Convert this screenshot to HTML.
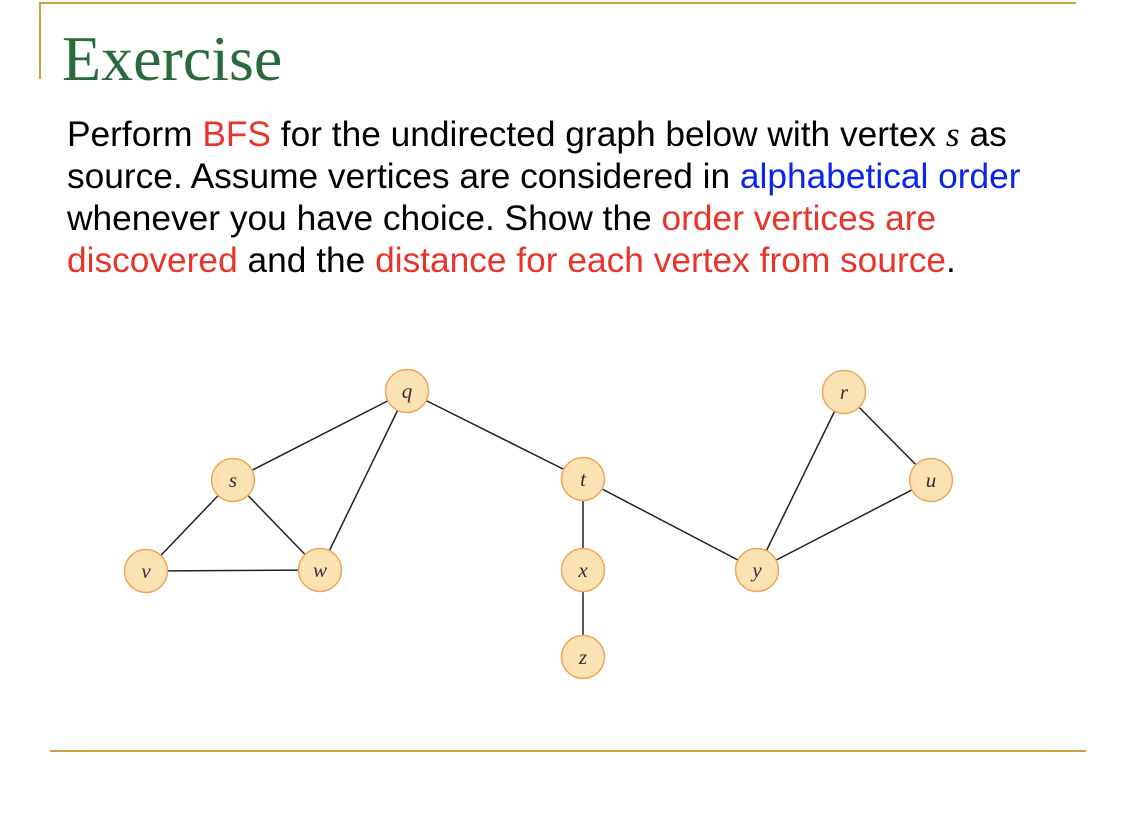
<!DOCTYPE html>
<html><head><style>
body{margin:0;width:1136px;height:830px;background:#fff;position:relative;overflow:hidden}
.b{position:absolute;background:#c9a13c}
h1{position:absolute;left:62px;top:21px;margin:0;font:normal 64px "Liberation Serif",serif;color:#2b6a3c;line-height:76px}
p{position:absolute;left:67px;top:114px;margin:0;font:35.3px/42px "Liberation Sans",sans-serif;color:#000;width:1060px;white-space:nowrap}
.r{color:#e8342a}.bl{color:#0a24f0}
</style></head><body>
<div class="b" style="left:40px;top:2px;width:1036px;height:2px"></div>
<div class="b" style="left:39px;top:2px;width:2px;height:77px"></div>
<div class="b" style="left:50px;top:750px;width:1036px;height:2px"></div>
<h1>Exercise</h1>
<p>Perform <span class="r">BFS</span> for the undirected graph below with vertex <i style="font-family:'Liberation Serif',serif">s</i> as<br>source. Assume vertices are considered in <span class="bl">alphabetical order</span><br>whenever you have choice. Show the <span class="r">order vertices are</span><br><span class="r">discovered</span> and the <span class="r">distance for each vertex from source</span>.</p>
<svg width="1136" height="830" style="position:absolute;left:0;top:0">
<g stroke="#222" stroke-width="1.5">
<line x1="233" y1="480" x2="407" y2="391"/><line x1="233" y1="480" x2="146" y2="571"/><line x1="233" y1="480" x2="320" y2="570"/>
<line x1="146" y1="571" x2="320" y2="570"/><line x1="320" y1="570" x2="407" y2="391"/><line x1="407" y1="391" x2="583" y2="479"/>
<line x1="583" y1="479" x2="583" y2="657"/><line x1="583" y1="479" x2="757" y2="570"/><line x1="757" y1="570" x2="844" y2="392"/>
<line x1="757" y1="570" x2="931" y2="480"/><line x1="844" y1="392" x2="931" y2="480"/>
</g>
<g fill="#fbe2b3" stroke="#eea65c" stroke-width="1.5">
<circle cx="407" cy="391" r="21.5"/><circle cx="233" cy="480" r="21.5"/><circle cx="146" cy="571" r="21.5"/><circle cx="320" cy="570" r="21.5"/>
<circle cx="583" cy="479" r="21.5"/><circle cx="583" cy="570" r="21.5"/><circle cx="583" cy="657" r="21.5"/><circle cx="757" cy="570" r="21.5"/>
<circle cx="844" cy="392" r="21.5"/><circle cx="931" cy="480" r="21.5"/>
</g>
<g font-family="Liberation Serif,serif" font-style="italic" font-size="21" fill="#333" text-anchor="middle">
<text x="407" y="398">q</text><text x="233" y="487">s</text><text x="146" y="578">v</text><text x="320" y="577">w</text>
<text x="583" y="486">t</text><text x="583" y="577">x</text><text x="583" y="664">z</text><text x="757" y="577">y</text>
<text x="844" y="399">r</text><text x="931" y="487">u</text>
</g>
</svg>
</body></html>
